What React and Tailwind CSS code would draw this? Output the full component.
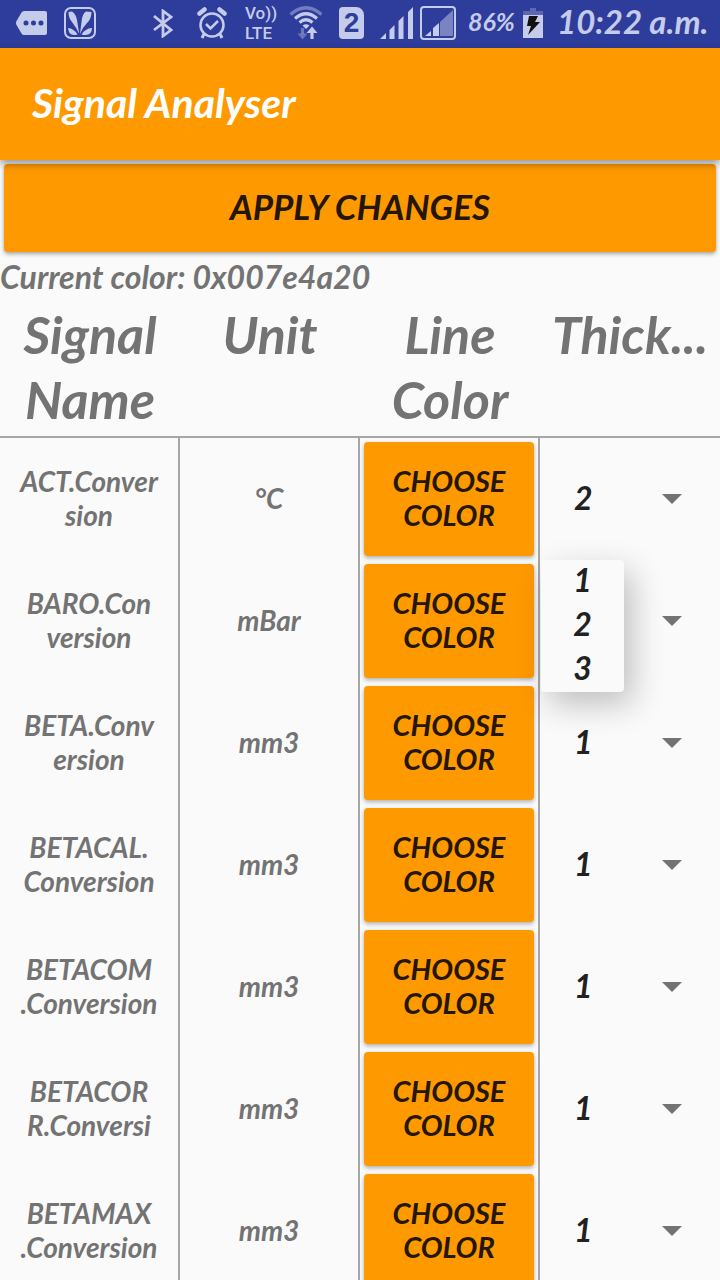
import { useState } from "react";

const SIGNALS = [
  { name: ["ACT.Conver", "sion"], unit: "°C", thickness: 2 },
  { name: ["BARO.Con", "version"], unit: "mBar", thickness: 1 },
  { name: ["BETA.Conv", "ersion"], unit: "mm3", thickness: 1 },
  { name: ["BETACAL.", "Conversion"], unit: "mm3", thickness: 1 },
  { name: ["BETACOM", ".Conversion"], unit: "mm3", thickness: 1 },
  { name: ["BETACOR", "R.Conversi"], unit: "mm3", thickness: 1 },
  { name: ["BETAMAX", ".Conversion"], unit: "mm3", thickness: 1 },
];

const OPTIONS = [1, 2, 3];

function MessageIcon() {
  return (
    <svg width="32" height="24" viewBox="0 0 32 24" aria-hidden="true">
      <path fill="currentColor" fillRule="evenodd" d="M8 0h21q2 0 2 2v20q0 2-2 2H8q-1.500 0-2.500-1.500L.5 14q-1-2 0-4L5.500 1.500Q6.500 0 8 0ZM10 9.500a2.500 2.500 0 1 0 0 5 2.500 2.500 0 0 0 0-5Zm7.500 0a2.500 2.500 0 1 0 0 5 2.500 2.500 0 0 0 0-5Zm7.500 0a2.500 2.500 0 1 0 0 5 2.500 2.500 0 0 0 0-5Z" />
    </svg>
  );
}

function LeafIcon() {
  return (
    <svg width="32" height="32" viewBox="0 0 32 32" aria-hidden="true">
      <rect x="1" y="1" width="30" height="30" rx="6" fill="none" stroke="currentColor" strokeWidth="2" />
      <path fill="currentColor" d="M4.500 5L8 4.500Q12 7 13 13L15.200 27Q12 20 8 15 4.500 11 4.500 5ZM27.500 5L22 4.500Q18 7 17.500 15L16 27Q18 21 23 16 27.500 12 27.500 5ZM4 21Q10 21.500 13.500 27.500 8 29 5.500 26 4.500 24 4 21ZM28 21Q21 21.500 17.500 27.500 24 29 26.500 26 28 24 28 21Z" />
    </svg>
  );
}

function BluetoothIcon() {
  return (
    <svg width="20" height="29" viewBox="0 0 20 29" fill="none" stroke="currentColor" strokeWidth="2.800" aria-hidden="true">
      <path d="M1 7l17 14-8 6V2l8 6L1 21" />
    </svg>
  );
}

function AlarmIcon() {
  return (
    <svg width="30" height="32" viewBox="0 0 30 32" fill="none" stroke="currentColor" aria-hidden="true">
      <circle cx="15" cy="18" r="11.500" strokeWidth="2.500" />
      <path d="M9 17l4.500 4.500L21 14" strokeWidth="2.600" />
      <path d="M2.500 6.500l5-4M27.500 6.500l-5-4" strokeWidth="4.500" strokeLinecap="round" />
      <path d="M7 27l-2 4M23 27l2 4" strokeWidth="3" />
    </svg>
  );
}

function WifiIcon() {
  return (
    <svg width="34" height="34" viewBox="0 0 34 34" fill="none" stroke="currentColor" strokeWidth="3.200" aria-hidden="true">
      <path d="M1.500 8.500Q17-5 32.500 8.500" opacity=".45" />
      <path d="M6 12.500q11-9.500 22 0M10.500 16.500q6.500-5.500 13 0" />
      <path d="M13.500 19.500q3.500-2.500 7 0L17 23Z" fill="currentColor" stroke="none" />
      <path d="M13.500 22v6" opacity=".4" />
      <path d="M8.500 27.500h10l-5 6Z" fill="currentColor" stroke="none" opacity=".4" />
      <path d="M23 33v-7" />
      <path d="M17.500 27h11L23 20.500Z" fill="currentColor" stroke="none" />
    </svg>
  );
}

function SimIcon() {
  return (
    <span className="flex h-8 w-[25px] items-center justify-center rounded-sm rounded-tr-lg bg-[#c5cbea] font-['Liberation_Sans'] text-[28px] leading-8 font-bold text-[#2e3d9b] not-italic">
      2
    </span>
  );
}

function SignalIcon() {
  return (
    <svg width="34" height="32" viewBox="0 0 34 32" fill="currentColor" aria-hidden="true">
      <path d="M0 32l6-6v6ZM9.500 32V23l5-5v14ZM18.500 32V14l5-5v23ZM28 32V5l5-5v32Z" />
    </svg>
  );
}

function BoxedSignalIcon() {
  return (
    <svg width="36" height="34" viewBox="0 0 36 34" aria-hidden="true">
      <rect x="1" y="1" width="34" height="32" rx="3" fill="none" stroke="currentColor" strokeWidth="2" />
      <path d="M5 30l6-5v5ZM13 30v-8l6-5v13Z" fill="currentColor" />
      <path d="M20 30V16L33 4v26Z" fill="currentColor" opacity=".5" />
    </svg>
  );
}

function BatteryIcon() {
  return (
    <svg width="20" height="30" viewBox="0 0 20 30" aria-hidden="true">
      <path d="M7 0h6v3h7v4H0V3h7Z" fill="currentColor" opacity=".3" />
      <path d="M0 7h20v23H0Z" fill="currentColor" />
      <path d="M6 8h9l-3 6h5L5 27l3-9H4Z" fill="#111" />
    </svg>
  );
}

function StatusBar() {
  return (
    <div className="flex h-12 shrink-0 items-center justify-between bg-[#2e3d9b] pr-[15px] pb-0.5 pl-4 text-[#c5cbea]">
      <div className="flex items-center gap-4">
        <MessageIcon />
        <LeafIcon />
      </div>
      <div className="flex items-center">
        <div className="flex items-center gap-6">
          <BluetoothIcon />
          <AlarmIcon />
        </div>
        <div className="ml-[18px] w-8 font-[Roboto,sans-serif] text-[17px] leading-5 font-medium not-italic">
          <div className="whitespace-nowrap">Vo))</div>
          <div>LTE</div>
        </div>
        <div className="ml-3 flex items-center gap-4">
          <WifiIcon />
          <SimIcon />
        </div>
        <div className="ml-4 flex items-center gap-1.5">
          <SignalIcon />
          <BoxedSignalIcon />
        </div>
        <span className="ml-3 w-[51px] pb-1 text-[25px] leading-8 font-bold whitespace-nowrap">86%</span>
        <span className="ml-1">
          <BatteryIcon />
        </span>
        <span className="ml-3.5 w-[148px] pb-1 text-[33px] leading-8 font-bold whitespace-nowrap">10:22 a.m.</span>
      </div>
    </div>
  );
}

function ThicknessCell({ signal, value, open, onToggle, onPick }) {
  return (
    <div className="relative grid items-center">
      <select
        aria-label={`Thickness of ${signal}`}
        value={value}
        onChange={(e) => onPick(Number(e.target.value))}
        onMouseDown={(e) => {
          e.preventDefault();
          onToggle();
        }}
        className="col-start-1 row-start-1 h-[110px] w-full appearance-none bg-transparent pb-0.5 pl-[34px] text-[32px] font-bold text-[#212121] italic"
      >
        {OPTIONS.map((o) => (
          <option key={o} value={o}>{o}</option>
        ))}
      </select>
      <svg className="pointer-events-none col-start-1 row-start-1 mr-[38px] justify-self-end" width="20" height="10" viewBox="0 0 20 10" aria-hidden="true">
        <path d="M0 0h20L10 10Z" fill="#737373" />
      </svg>
      {open && (
        <ul
          role="listbox"
          aria-label="Thickness"
          className="absolute top-[116px] left-px z-10 w-[83px] rounded-sm bg-[#fafafa] shadow-[8px_12px_32px_rgba(0,0,0,0.24)]"
        >
          {OPTIONS.map((o) => (
            <li key={o} role="option" aria-selected={o === value}>
              <button
                type="button"
                onClick={() => onPick(o)}
                className="block h-11 w-full pb-1 text-center text-[32px] leading-10 font-bold text-[#212121] italic"
              >
                {o}
              </button>
            </li>
          ))}
        </ul>
      )}
    </div>
  );
}

export default function App() {
  const [values, setValues] = useState(SIGNALS.map((s) => s.thickness));
  const [openRow, setOpenRow] = useState(0);

  const pick = (row, value) => {
    setValues(values.map((v, i) => (i === row ? value : v)));
    setOpenRow(-1);
  };

  return (
    <div className="flex h-screen flex-col overflow-hidden bg-[#fafafa] font-[Lato,sans-serif] text-[#737373] italic">
      <StatusBar />
      <header className="relative z-20 flex h-28 shrink-0 items-center bg-[#ff9900] px-8 pb-0.5 shadow-[0_4px_8px_rgba(0,0,0,0.4)]">
        <h1 className="text-[41px] leading-[48px] font-bold text-white">Signal Analyser</h1>
      </header>
      <main className="min-h-0 flex-1 overflow-x-hidden overflow-y-auto [scrollbar-width:none]">
        <div className="p-1">
          <button
            type="button"
            className="block h-[88px] w-full rounded-sm bg-[#ff9900] pb-1 text-[35px] font-bold text-[#241600] italic shadow-[0_2px_4px_rgba(0,0,0,0.35)]"
          >
            APPLY CHANGES
          </button>
        </div>
        <p className="h-[46px] text-[32px] leading-[42px] font-bold whitespace-nowrap">Current color: 0x007e4a20</p>
        <table className="w-full table-fixed border-separate border-spacing-0">
          <thead>
            <tr className="h-[136px] align-top text-[52px] leading-[65px]">
              {["Signal Name", "Unit", "Line Color", "Thick..."].map((title) => (
                <th key={title} scope="col" className="border-b-2 border-[#a6a6a6] px-2 text-center font-bold">
                  {title}
                </th>
              ))}
            </tr>
          </thead>
          <tbody>
            {SIGNALS.map((s, i) => (
              <tr key={s.name.join("")} className="h-[122px] text-center text-[28px] leading-[34px] font-bold">
                <td className="border-r-2 border-[#a6a6a6] px-0 pt-0 pb-0.5">
                  {s.name[0]}
                  <br />
                  {s.name[1]}
                </td>
                <td className="border-r-2 border-[#a6a6a6] px-0 pt-0 pb-0.5">{s.unit}</td>
                <td className="border-r-2 border-[#a6a6a6] p-1">
                  <button
                    type="button"
                    className="block h-[114px] w-full rounded-sm bg-[#ff9900] px-4 pb-0.5 text-[29px] leading-[34px] font-bold text-[#241600] italic shadow-[0_2px_4px_rgba(0,0,0,0.3)]"
                  >
                    CHOOSE COLOR
                  </button>
                </td>
                <td className="p-0">
                  <ThicknessCell
                    signal={s.name.join("")}
                    value={values[i]}
                    open={openRow === i}
                    onToggle={() => setOpenRow(openRow === i ? -1 : i)}
                    onPick={(value) => pick(i, value)}
                  />
                </td>
              </tr>
            ))}
          </tbody>
        </table>
      </main>
    </div>
  );
}
